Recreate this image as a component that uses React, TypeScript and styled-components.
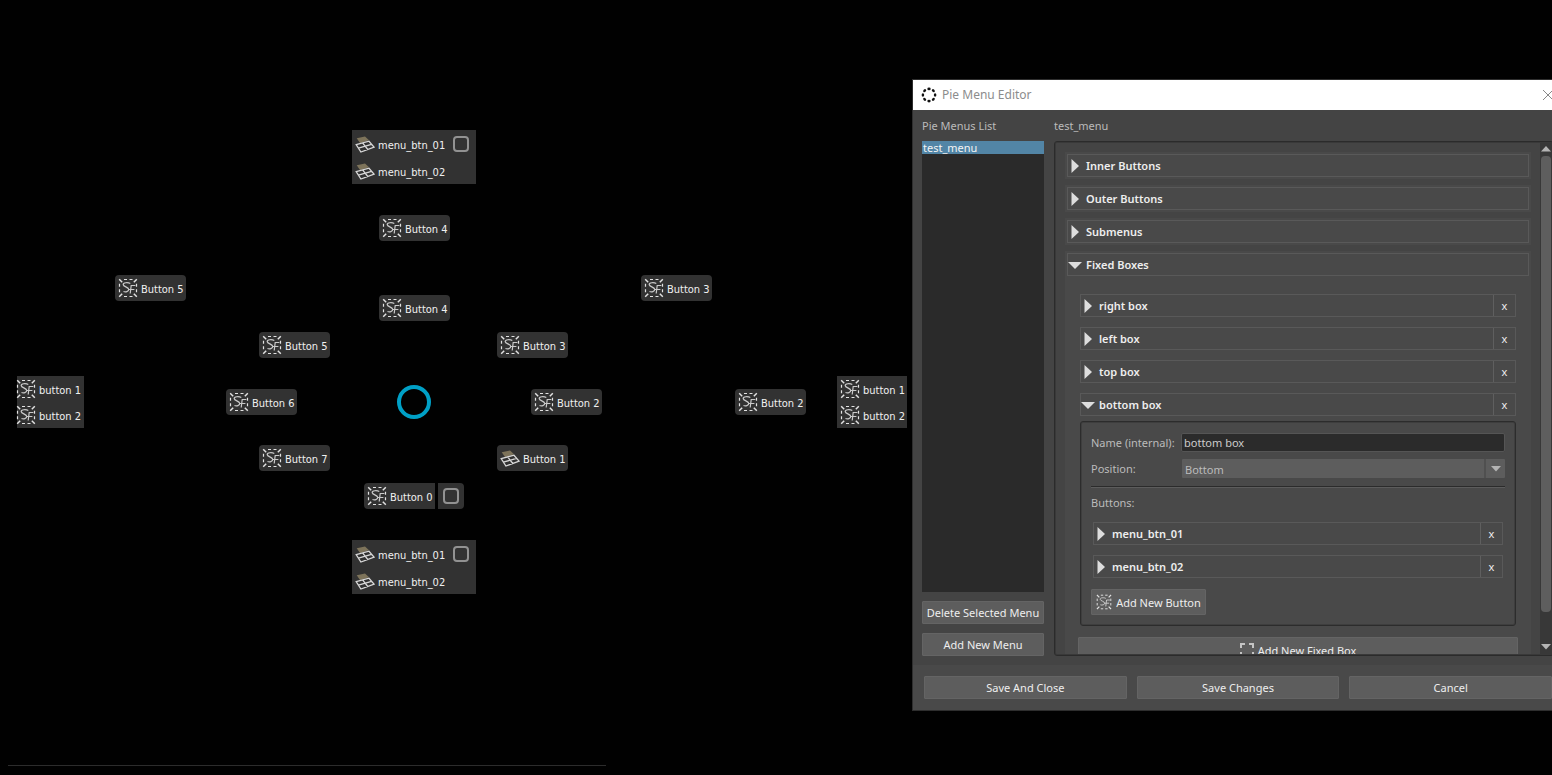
import React, { useState } from "react";
import styled, { createGlobalStyle, css } from "styled-components";

const GlobalStyle = createGlobalStyle`
  * { box-sizing: border-box; }
  html, body { margin: 0; background: #000; }
  body { overflow: hidden; font: 11px/16px "Noto Sans", "Open Sans", sans-serif; color: #bbb; }
  button, input, select { font: inherit; color: inherit; margin: 0; padding: 0; border: 0; background: none; border-radius: 0; outline: 0; }
  ul { list-style: none; margin: 0; padding: 0; }
  h1, h2 { margin: 0; font: inherit; }
  svg { display: block; flex: none; }
`;

/* ---------- icons ---------- */

const ScriptIcon = ({ size = 20 }: { size?: number }) => (
  <svg width={size} height={size} viewBox="0 0 20 20" fill="none" stroke="#e2e2e2" strokeWidth="1.2">
    <path d="M1.200 1.200l3 3M18.800 1.200l-3 3M1.200 18.800l3-3M18.800 18.800l-3-3" strokeWidth="1.500" />
    <path d="M6 1.500h3M11.500 1.500h3M6 18.500h3M11.500 18.500h3M1.500 5.800v3M1.500 11.300v3M18.500 5.800v3M18.500 11.300v3" />
    <path d="M12.300 5.500C10 4.200 5 4.400 5.200 6.600C5.400 8.800 10.800 9 10.800 11.600C10.800 13.600 7.500 14.300 5.500 13.500" stroke="#cacaca" />
    <path d="M17.400 7.500H13.200L12.200 15.500M10.500 11.500H16.400" stroke="#cacaca" />
  </svg>
);

const GridIcon = () => (
  <svg width="20" height="20" viewBox="0 0 20 20" fill="none">
    <path d="M1.700 4.200L10 2.400L14 6.200L5 9Z" fill="#7d735a" />
    <path d="M1.200 10.600L14 7.200L19.200 13.200L5.900 18Z M7.600 8.900L12.800 15.500 M3.400 14.200L16.500 10.300" stroke="#d8d8d8" strokeWidth="1.300" />
  </svg>
);

const RingIcon = () => (
  <svg width="16" height="16" viewBox="0 0 16 16" fill="#111">
    {[0, 45, 90, 135, 180, 225, 270, 315].map((a) => (
      <ellipse key={a} cx="8" cy="1.900" rx="1.700" ry="1.300" transform={`rotate(${a} 8 8)`} />
    ))}
  </svg>
);

const BoxIcon = () => (
  <svg width="14" height="14" viewBox="0 0 14 14" fill="none" stroke="#c4c4c4" strokeWidth="2">
    <path d="M1 5V1h4M9 1h4v4M13 9v4H9M5 13H1V9" />
  </svg>
);

const CloseIcon = () => (
  <svg width="10" height="10" viewBox="0 0 10 10" stroke="#888">
    <path d="M0 0L10 10M10 0L0 10" />
  </svg>
);

const Arrow = ({ open }: { open?: boolean }) => (
  <svg width="16" height="16" viewBox="0 0 16 16" fill="#ddd">
    <path d={open ? "M0 5H14L7 12Z" : "M3.500 1L11 8L3.500 15Z"} />
  </svg>
);

const SmallArrow = ({ up }: { up?: boolean }) => (
  <svg width="10" height="6" viewBox="0 0 10 6" fill="#b4b4b4">
    <path d={up ? "M0 5.500L5 0L10 5.500Z" : "M0 0L10 0L5 5.500Z"} />
  </svg>
);

/* ---------- pie canvas ---------- */

const Desktop = styled.main`
  position: relative;
  height: 100vh;
  overflow: hidden;
  background: #010101;
`;

const Pie = styled.section`
  position: absolute;
  inset: 0;
  font-family: "DejaVu Sans Condensed", "DejaVu Sans", sans-serif;
  color: #f0f0f0;
`;

const Placed = styled.div<{ $x: number; $y: number }>`
  position: absolute;
  left: ${(p) => p.$x}px;
  top: ${(p) => p.$y}px;
  display: flex;
  gap: 3px;
`;

const Caption = styled.span<{ $drop?: number }>`
  padding-top: ${(p) => p.$drop ?? 3}px;
`;

const PieButton = styled.button<{ $joined?: boolean }>`
  display: flex;
  align-items: center;
  gap: 3px;
  width: 71px;
  height: 26px;
  padding-left: 3px;
  background: #323232;
  border-radius: ${(p) => (p.$joined ? "4px 0 0 4px" : "4px")};
  white-space: nowrap;
`;

const OptionCell = styled.label`
  display: grid;
  place-items: center;
  width: 26px;
  height: 26px;
  background: #323232;
  border-radius: 0 4px 4px 0;
`;

const Check = styled.input`
  appearance: none;
  width: 16px;
  height: 16px;
  border: 2px solid #929292;
  border-radius: 4px;
`;

const PieBox = styled.div<{ $wide?: boolean; $flush?: boolean }>`
  width: ${(p) => (p.$wide ? 124 : p.$flush ? 67 : 70)}px;
  padding-left: ${(p) => (p.$flush ? 0 : 3)}px;
  background: #323232;
`;

const PieRow = styled.div<{ $tall?: boolean }>`
  display: flex;
  align-items: center;
  gap: 8px;
  height: ${(p) => (p.$tall ? 27 : 26)}px;
`;

const RowButton = styled.button<{ $flush?: boolean }>`
  display: flex;
  align-items: center;
  gap: 3px;
  margin-left: ${(p) => (p.$flush ? -1 : 0)}px;
  white-space: nowrap;
`;

const Hub = styled.div`
  width: 34px;
  height: 34px;
  border: 4px solid #00a0c6;
  border-radius: 50%;
`;

const BottomLine = styled.div`
  position: absolute;
  left: 8px;
  bottom: 9px;
  width: 598px;
  height: 1px;
  background: #2c2c2c;
`;

/* ---------- editor window ---------- */

const Window = styled.section`
  position: absolute;
  top: 79px;
  left: 912px;
  right: -12px;
  height: calc(100vh - 143px);
  min-height: 400px;
  display: flex;
  flex-direction: column;
  border: 1px solid #2e2e2e;
  background: #444;
`;

const TitleBar = styled.header`
  display: flex;
  align-items: center;
  gap: 5px;
  height: 30px;
  padding: 0 10px 0 8px;
  background: #fff;
  color: #8c8c8c;
  font-size: 12px;

  h1 { flex: 1; }
`;

const Body = styled.div`
  flex: 1;
  min-height: 0;
  display: flex;
  gap: 10px;
  padding: 0 9px 9px;
`;

const Column = styled.div<{ $grow?: boolean }>`
  display: flex;
  flex-direction: column;
  min-width: 0;
  ${(p) => (p.$grow ? css`flex: 1;` : css`width: 122px;`)}
`;

const ColumnTitle = styled.h2`
  height: 31px;
  line-height: 32px;
`;

const MenuList = styled.ul`
  flex: 1;
  background: #2a2a2a;
`;

const MenuItem = styled.button`
  display: block;
  width: 100%;
  height: 13px;
  padding-left: 1px;
  line-height: 13px;
  text-align: left;
  background: #5285a6;
  color: #f4f4f4;
`;

const PushButton = styled.button<{ $tall?: boolean }>`
  display: flex;
  align-items: center;
  justify-content: center;
  gap: 4px;
  height: ${(p) => (p.$tall ? 26 : 23)}px;
  background: #5d5d5d;
  border: 1px solid #646464;
  border-radius: 1px;
  color: #eee;
  white-space: nowrap;
`;

const ListActions = styled.div`
  display: grid;
  gap: 9px;
  padding-top: 9px;
`;

const Frame = styled.div`
  flex: 1;
  min-height: 0;
  display: flex;
  padding: 1px;
  border: 1px solid #2b2b2b;
  border-radius: 3px;
  box-shadow: inset 0 0 0 1px #393939;
`;

const Sections = styled.div`
  flex: 1;
  min-width: 0;
  overflow-y: auto;
  scrollbar-width: none;
  display: flex;
  flex-direction: column;
  gap: 6px;
  padding: 9px;

  > * { flex: none; }
`;

const Section = styled.section`
  padding: 2px;
  background: #494949;
`;

const HeaderRow = styled.div`
  display: flex;
  height: 23px;
  border: 1px solid #595959;
`;

const Toggle = styled.button`
  flex: 1;
  display: flex;
  align-items: center;
  gap: 2px;
  color: #eee;
  font-weight: 600;
  text-align: left;
`;

const Remove = styled.button`
  width: 22px;
  border-left: 1px solid #5f5f5f;
  color: #eee;
`;

const SectionBody = styled.div`
  padding: 18px 11px 11px;
`;

const Stack = styled.div`
  display: grid;
  gap: 10px;
  padding: 0 2px;
`;

const Details = styled.div`
  margin: 5px 2px 11px;
  padding: 11px 10px 10px;
  border: 1px solid #2c2c2c;
  border-radius: 3px;
  box-shadow: inset 0 0 0 1px #3e3e3e;
`;

const Field = styled.div`
  display: flex;
  align-items: center;
  height: 19px;
  margin-bottom: 7px;

  label { width: 90px; }
`;

const TextBox = styled.input`
  flex: 1;
  min-width: 0;
  height: 19px;
  padding: 0 2px;
  background: #2b2b2b;
  border: 1px solid #555;
  border-radius: 2px;
  color: #ccc;
`;

const SelectWrap = styled.div`
  flex: 1;
  display: flex;
  position: relative;
  height: 19px;
  margin-left: 1px;
  background: #5d5d5d;
  border-radius: 1px;

  select { flex: 1; appearance: none; padding: 2px 3px 0; }
`;

const SelectArrow = styled.span`
  position: absolute;
  inset: 0 0 0 auto;
  display: grid;
  place-items: center;
  width: 21px;
  border-left: 2px solid #505050;
  pointer-events: none;
`;

const Divider = styled.hr`
  height: 2px;
  margin: 8px 0 7px;
  border: 0;
  border-top: 1px solid #2b2b2b;
  border-bottom: 1px solid #5c5c5c;
`;

const ButtonsArea = styled.div`
  padding: 11px 0;
`;

const AddButton = styled(PushButton)`
  width: 115px;
`;

const AddBox = styled(PushButton)`
  width: 100%;
`;

const ScrollTrack = styled.div`
  display: flex;
  flex-direction: column;
  align-items: center;
  width: 12px;
  padding: 3px 0 4px;
  background: #383838;
`;

const ScrollThumb = styled.div`
  flex: 457;
  width: 10px;
  margin-top: 4px;
  background: #5e5e5e;
  border-radius: 4px;
`;

const ScrollRest = styled.div`
  flex: 32;
`;

const Footer = styled.footer`
  display: grid;
  grid-template-columns: repeat(3, 1fr);
  gap: 10px;
  padding: 11px;
  background: #494949;
`;

/* ---------- data ---------- */

const pieButtons = [
  { x: 379, y: 215, n: 4 },
  { x: 379, y: 295, n: 4 },
  { x: 115, y: 275, n: 5 },
  { x: 641, y: 275, n: 3 },
  { x: 259, y: 332, n: 5 },
  { x: 497, y: 332, n: 3 },
  { x: 226, y: 389, n: 6 },
  { x: 531, y: 389, n: 2 },
  { x: 735, y: 389, n: 2 },
  { x: 259, y: 445, n: 7 },
  { x: 497, y: 445, n: 1, grid: true },
];

const MenuBox = ({ y }: { y: number }) => (
  <Placed $x={352} $y={y}>
    <PieBox $wide>
      <PieRow $tall>
        <RowButton><GridIcon /><Caption $drop={4}>menu_btn_01</Caption></RowButton>
        <Check type="checkbox" aria-label="menu_btn_01 options" />
      </PieRow>
      <PieRow $tall>
        <RowButton><GridIcon /><Caption $drop={4}>menu_btn_02</Caption></RowButton>
      </PieRow>
    </PieBox>
  </Placed>
);

const SideBox = ({ x, flush }: { x: number; flush?: boolean }) => (
  <Placed $x={x} $y={376}>
    <PieBox $flush={flush}>
      {["button 1", "button 2"].map((t) => (
        <PieRow key={t}>
          <RowButton $flush={flush}><ScriptIcon /><Caption>{t}</Caption></RowButton>
        </PieRow>
      ))}
    </PieBox>
  </Placed>
);

const Header = ({ title, open, removable }: { title: string; open?: boolean; removable?: boolean }) => (
  <HeaderRow>
    <Toggle aria-expanded={!!open}><Arrow open={open} />{title}</Toggle>
    {removable && <Remove aria-label={`Remove ${title}`}>x</Remove>}
  </HeaderRow>
);

export default function App() {
  const [name, setName] = useState("bottom box");
  return (
    <Desktop>
      <GlobalStyle />
      <Pie>
        <MenuBox y={130} />
        {pieButtons.map((b) => (
          <Placed key={`${b.x}-${b.y}`} $x={b.x} $y={b.y}>
            <PieButton>{b.grid ? <GridIcon /> : <ScriptIcon />}<Caption>Button {b.n}</Caption></PieButton>
          </Placed>
        ))}
        <SideBox x={17} flush />
        <Placed $x={397} $y={385}><Hub /></Placed>
        <SideBox x={837} />
        <Placed $x={364} $y={483}>
          <PieButton $joined><ScriptIcon /><Caption>Button 0</Caption></PieButton>
          <OptionCell><Check type="checkbox" aria-label="Button 0 options" /></OptionCell>
        </Placed>
        <MenuBox y={540} />
        <BottomLine />
      </Pie>

      <Window>
        <TitleBar>
          <RingIcon />
          <h1>Pie Menu Editor</h1>
          <button aria-label="Close"><CloseIcon /></button>
        </TitleBar>
        <Body>
          <Column>
            <ColumnTitle>Pie Menus List</ColumnTitle>
            <MenuList>
              <li><MenuItem>test_menu</MenuItem></li>
            </MenuList>
            <ListActions>
              <PushButton>Delete Selected Menu</PushButton>
              <PushButton>Add New Menu</PushButton>
            </ListActions>
          </Column>
          <Column $grow>
            <ColumnTitle>test_menu</ColumnTitle>
            <Frame>
              <Sections>
                <Section><Header title="Inner Buttons" /></Section>
                <Section><Header title="Outer Buttons" /></Section>
                <Section><Header title="Submenus" /></Section>
                <Section>
                  <Header title="Fixed Boxes" open />
                  <SectionBody>
                    <Stack>
                      <Header title="right box" removable />
                      <Header title="left box" removable />
                      <Header title="top box" removable />
                      <Header title="bottom box" open removable />
                    </Stack>
                    <Details>
                      <Field>
                        <label htmlFor="box-name">Name (internal):</label>
                        <TextBox id="box-name" value={name} onChange={(e) => setName(e.target.value)} />
                      </Field>
                      <Field>
                        <label htmlFor="box-position">Position:</label>
                        <SelectWrap>
                          <select id="box-position" defaultValue="Bottom">
                            <option>Bottom</option>
                            <option>Top</option>
                            <option>Left</option>
                            <option>Right</option>
                          </select>
                          <SelectArrow><SmallArrow /></SelectArrow>
                        </SelectWrap>
                      </Field>
                      <Divider />
                      <div>Buttons:</div>
                      <ButtonsArea>
                        <Stack>
                          <Header title="menu_btn_01" removable />
                          <Header title="menu_btn_02" removable />
                        </Stack>
                      </ButtonsArea>
                      <AddButton $tall><ScriptIcon size={16} /><Caption $drop={2}>Add New Button</Caption></AddButton>
                    </Details>
                    <AddBox $tall><BoxIcon /><Caption $drop={2}>Add New Fixed Box</Caption></AddBox>
                  </SectionBody>
                </Section>
              </Sections>
              <ScrollTrack>
                <SmallArrow up />
                <ScrollThumb />
                <ScrollRest />
                <SmallArrow />
              </ScrollTrack>
            </Frame>
          </Column>
        </Body>
        <Footer>
          <PushButton>Save And Close</PushButton>
          <PushButton>Save Changes</PushButton>
          <PushButton>Cancel</PushButton>
        </Footer>
      </Window>
    </Desktop>
  );
}
